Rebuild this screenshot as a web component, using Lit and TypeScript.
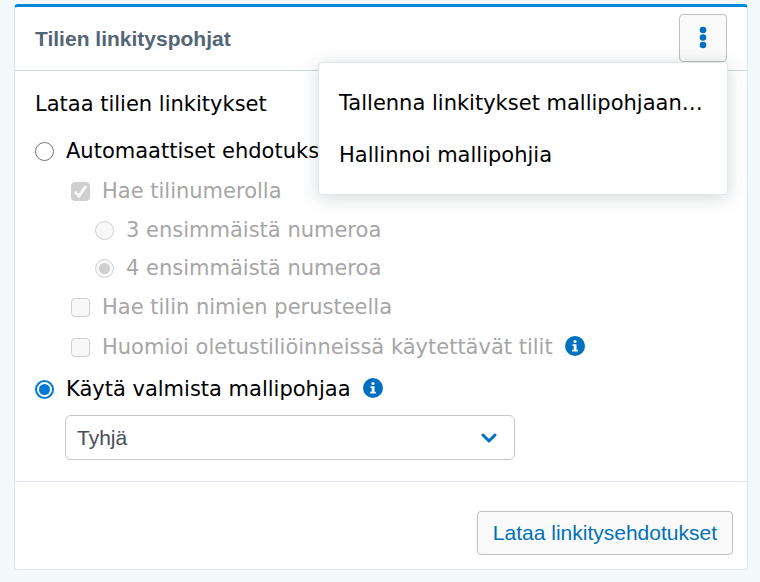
import { LitElement, html, css, svg } from "lit";
import { customElement, state } from "lit/decorators.js";

const infoIcon = html`<svg class="info-icon" viewBox="0 0 20 20" aria-hidden="true">
  <circle cx="10" cy="10" r="10" fill="#0071bf" />
  <circle cx="10" cy="5.5" r="1.6" fill="#fff" />
  <path d="M7.5 8.2h4v5.6h1.3v1.7H7.2v-1.7h1.5V9.9H7.5z" fill="#fff" />
</svg>`;

const dots = [4, 11.5, 19].map((y) => svg`<circle cx="4" cy=${y} r="3.3" />`);

@customElement("app-root")
export class AppRoot extends LitElement {
  @state() private menuOpen = true;

  static styles = css`
    :host {
      display: block;
      box-sizing: border-box;
      min-height: 100vh;
      padding: 4px 12px 12px 14px;
      background: #f3f8fb;
      color: #000;
      font: 21px/26px Verdana, "DejaVu Sans", sans-serif;
    }
    * {
      box-sizing: border-box;
    }
    .card {
      background: #fff;
      border: 1px solid #dfe6ec;
      border-top: 3px solid #008ad8;
      border-radius: 4px;
    }
    .head {
      display: flex;
      align-items: center;
      justify-content: space-between;
      height: 64px;
      padding: 0 20px 2px;
      border-bottom: 1px solid #c6d6e2;
    }
    h1 {
      margin: 0;
      padding-top: 2px;
      color: #526676;
      font: bold 21px/26px "Liberation Sans", Arial, sans-serif;
    }
    .menu-wrap {
      position: relative;
    }
    button {
      font: inherit;
      cursor: pointer;
    }
    .btn {
      background: #fafafa;
      border: 1px solid #bfbfbf;
      border-radius: 4px;
      color: #0071b8;
      font: 21px/26px "Liberation Sans", Arial, sans-serif;
    }
    .more {
      display: grid;
      place-items: center;
      width: 48px;
      height: 48px;
      padding: 0;
    }
    .more svg {
      width: 8px;
      height: 23px;
      fill: #0071bf;
    }
    .menu {
      position: absolute;
      z-index: 1;
      top: 100%;
      right: 0;
      min-width: 410px;
      margin: 0 -1px 0 0;
      padding: 14px 0 13px;
      list-style: none;
      background: #fff;
      border: 1px solid #dfe6ee;
      border-radius: 4px;
      box-shadow: 0 3px 18px rgba(40, 60, 70, 0.2);
    }
    .menu button {
      display: block;
      width: 100%;
      height: 52px;
      padding: 0 20px;
      border: 0;
      background: none;
      color: inherit;
      text-align: left;
      white-space: nowrap;
    }
    fieldset {
      min-width: 0;
      margin: 0;
      padding: 20px 20px 21px;
      border: 0;
    }
    legend {
      float: left;
      width: 100%;
      height: 40px;
      padding: 0;
    }
    .options {
      clear: both;
    }
    .row {
      display: flex;
      align-items: center;
      height: 40px;
      white-space: nowrap;
    }
    .row label {
      display: flex;
      align-items: center;
      gap: 12px;
    }
    .sub {
      padding: 0 0 2px 36px;
      color: #a6a6a6;
    }
    .digits {
      padding-left: 24px;
    }
    .digits .row {
      height: 38px;
    }
    input {
      appearance: none;
      display: grid;
      place-items: center;
      flex: none;
      width: 19px;
      height: 19px;
      margin: 0;
      border: 1px solid #767676;
      border-radius: 4px;
      background: #fff;
    }
    input[type="radio"] {
      border-radius: 50%;
    }
    input[type="radio"]:checked {
      border: 2px solid #0078d7;
    }
    input[type="radio"]:checked::before {
      content: "";
      width: 11px;
      height: 11px;
      border-radius: 50%;
      background: #0078d7;
    }
    input:disabled {
      border-color: #cfcfcf;
      background: #f8f8f8;
    }
    input[type="radio"]:checked:disabled {
      border: 1px solid #cfcfcf;
    }
    input[type="radio"]:checked:disabled::before {
      background: #cfcfcf;
    }
    input[type="checkbox"]:checked {
      background: #cfcfcf;
    }
    .tick {
      display: grid;
    }
    .tick > * {
      grid-area: 1 / 1;
    }
    .tick svg {
      width: 19px;
      height: 19px;
      fill: none;
      stroke: #f8f8f8;
      stroke-width: 3;
      pointer-events: none;
    }
    .info {
      display: flex;
      margin-left: 12px;
      padding: 0 0 2px;
      border: 0;
      background: none;
    }
    .info-icon {
      width: 20px;
      height: 20px;
    }
    .picker {
      display: grid;
      align-items: center;
      max-width: 450px;
      margin: 6px 0 0 30px;
    }
    .picker > * {
      grid-area: 1 / 1;
    }
    select {
      appearance: none;
      width: 100%;
      height: 45px;
      padding: 0 48px 0 11px;
      border: 1px solid #c8c8c8;
      border-radius: 6px;
      background: #fff;
      color: #454f59;
      font: 21px/26px "Liberation Sans", Arial, sans-serif;
    }
    .picker svg {
      justify-self: end;
      width: 16px;
      height: 10px;
      margin-right: 18px;
      fill: none;
      stroke: #0071bf;
      stroke-width: 3;
      stroke-linecap: round;
      stroke-linejoin: round;
      pointer-events: none;
    }
    .foot {
      display: flex;
      justify-content: flex-end;
      padding: 29px 14px 14px;
      border-top: 1px solid #dfe6ec;
    }
    .load {
      height: 44px;
      padding: 0 15px;
    }
  `;

  private info(label: string) {
    return html`<button class="info" type="button" aria-label=${label}>${infoIcon}</button>`;
  }

  render() {
    return html`
      <section class="card">
        <header class="head">
          <h1>Tilien linkityspohjat</h1>
          <div class="menu-wrap">
            <button
              class="btn more"
              type="button"
              aria-label="Toiminnot"
              aria-expanded=${this.menuOpen ? "true" : "false"}
              @click=${() => (this.menuOpen = !this.menuOpen)}
            >
              <svg viewBox="0 0 8 23" aria-hidden="true">${dots}</svg>
            </button>
            ${this.menuOpen
              ? html`<ul class="menu">
                  <li><button type="button">Tallenna linkitykset mallipohjaan…</button></li>
                  <li><button type="button">Hallinnoi mallipohjia</button></li>
                </ul>`
              : null}
          </div>
        </header>
        <fieldset>
          <legend>Lataa tilien linkitykset</legend>
          <div class="options">
            <div class="row">
              <label><input type="radio" name="source" />Automaattiset ehdotukset</label>
            </div>
            <div class="sub">
              <div class="row">
                <label>
                  <span class="tick">
                    <input type="checkbox" checked disabled />
                    <svg viewBox="0 0 19 19" aria-hidden="true"><path d="M4 10l4 4 7-10" /></svg>
                  </span>
                  Hae tilinumerolla
                </label>
              </div>
              <div class="digits">
                <div class="row">
                  <label><input type="radio" name="digits" disabled />3 ensimmäistä numeroa</label>
                </div>
                <div class="row">
                  <label><input type="radio" name="digits" checked disabled />4 ensimmäistä numeroa</label>
                </div>
              </div>
              <div class="row">
                <label><input type="checkbox" disabled />Hae tilin nimien perusteella</label>
              </div>
              <div class="row">
                <label><input type="checkbox" disabled />Huomioi oletustiliöinneissä käytettävät tilit</label>
                ${this.info("Lisätietoja oletustiliöinneistä")}
              </div>
            </div>
            <div class="row">
              <label><input type="radio" name="source" checked />Käytä valmista mallipohjaa</label>
              ${this.info("Lisätietoja mallipohjista")}
            </div>
            <div class="picker">
              <select aria-label="Mallipohja">
                <option>Tyhjä</option>
              </select>
              <svg viewBox="0 0 16 10" aria-hidden="true"><path d="M2 2l6 6 6-6" /></svg>
            </div>
          </div>
        </fieldset>
        <footer class="foot">
          <button class="btn load" type="button">Lataa linkitysehdotukset</button>
        </footer>
      </section>
    `;
  }
}
